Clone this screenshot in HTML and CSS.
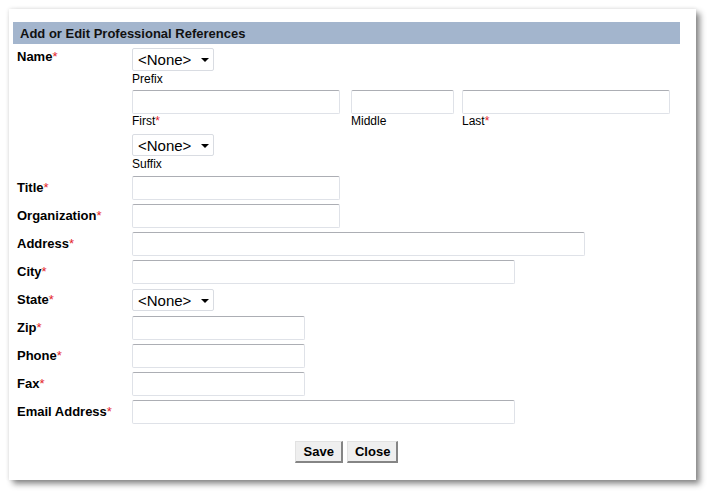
FILE: index.html
```html
<!DOCTYPE html>
<html>
<head>
<meta charset="utf-8">
<link rel="stylesheet" href="styles.css">
</head>
<body>
<div class="window">
  <div class="header">Add or Edit Professional References</div>
  <div class="form">
    <div class="label name-label">Name<span class="req">*</span></div>
    <div class="name-fields">
      <div class="select"><span>&lt;None&gt;</span><i class="arrow"></i></div>
      <div class="sub">Prefix</div>
      <div class="name-row">
        <div class="col col-first"><input class="input w208" type="text"><div class="sub sub-tight">First<span class="req">*</span></div></div>
        <div class="col col-middle"><input class="input w103" type="text"><div class="sub sub-tight">Middle</div></div>
        <div class="col"><input class="input w208" type="text"><div class="sub sub-tight">Last<span class="req">*</span></div></div>
      </div>
      <div class="select suffix"><span>&lt;None&gt;</span><i class="arrow"></i></div>
      <div class="sub">Suffix</div>
    </div>

    <div class="label">Title<span class="req">*</span></div>
    <div class="field"><input class="input w208" type="text"></div>

    <div class="label">Organization<span class="req">*</span></div>
    <div class="field"><input class="input w208" type="text"></div>

    <div class="label">Address<span class="req">*</span></div>
    <div class="field"><input class="input w453" type="text"></div>

    <div class="label">City<span class="req">*</span></div>
    <div class="field"><input class="input w383" type="text"></div>

    <div class="label">State<span class="req">*</span></div>
    <div class="field"><div class="select state"><span>&lt;None&gt;</span><i class="arrow"></i></div></div>

    <div class="label">Zip<span class="req">*</span></div>
    <div class="field"><input class="input w173" type="text"></div>

    <div class="label">Phone<span class="req">*</span></div>
    <div class="field"><input class="input w173" type="text"></div>

    <div class="label">Fax<span class="req">*</span></div>
    <div class="field"><input class="input w173" type="text"></div>

    <div class="label">Email Address<span class="req">*</span></div>
    <div class="field"><input class="input w383" type="text"></div>
  </div>
  <div class="buttons">
    <button class="btn btn-save" type="button">Save</button>
    <button class="btn" type="button">Close</button>
  </div>
</div>
</body>
</html>
```

FILE: styles.css
```css
html, body {
  margin: 0;
  padding: 0;
  background: #ffffff;
}

body {
  font-family: "Liberation Sans", Arial, sans-serif;
  color: #000;
  min-height: 494px;
  overflow: hidden;
}

.window {
  margin: 9px 0 0 9px;
  width: 687px;
  height: 471px;
  box-sizing: border-box;
  padding: 13px 0 0 4px;
  background: #fff;
  box-shadow: 4px 4px 6px rgba(0, 0, 0, 0.45), 0 0 4px rgba(0, 0, 0, 0.12);
}

.header {
  width: 667px;
  height: 22px;
  box-sizing: border-box;
  padding-left: 7px;
  background: #a3b5cd;
  font-weight: bold;
  font-size: 13px;
  line-height: 23px;
  color: #111;
}

.form {
  display: grid;
  grid-template-columns: 115px auto;
  grid-template-rows: 126px;
  grid-auto-rows: 28px;
  margin-top: 4px;
  padding-left: 4px;
}

.label {
  display: flex;
  align-items: center;
  font-weight: bold;
  font-size: 13px;
  line-height: 15px;
  white-space: nowrap;
  padding-bottom: 1px;
}

.name-label {
  align-self: start;
  margin-top: 1px;
  padding-bottom: 0;
}

.req {
  color: #e3242b;
  font-weight: normal;
}

.field {
  display: flex;
  align-items: center;
}

.name-fields {
  display: flex;
  flex-direction: column;
  align-items: flex-start;
}

.sub {
  font-size: 12px;
  line-height: 14px;
  margin-top: 1px;
}

.sub-tight {
  margin-top: 0;
}

.name-row {
  display: flex;
  margin-top: 4px;
}

.col {
  display: flex;
  flex-direction: column;
}

.col-first {
  margin-right: 11px;
}

.col-middle {
  margin-right: 8px;
}

.input {
  display: block;
  margin: 0;
  height: 24px;
  box-sizing: border-box;
  border: 1px solid #dfe2e8;
  border-top-color: #acaeb4;
  border-radius: 2px;
  background: #fff;
  padding: 0 3px;
  font-family: "Liberation Sans", Arial, sans-serif;
  font-size: 13px;
}

.w103 { width: 103px; }
.w173 { width: 173px; }
.w208 { width: 208px; }
.w383 { width: 383px; }
.w453 { width: 453px; }

.select {
  display: flex;
  align-items: center;
  justify-content: space-between;
  width: 82px;
  height: 23px;
  box-sizing: border-box;
  border: 1px solid #d9dce2;
  border-radius: 2px;
  padding: 0 4px 0 5px;
  font-size: 15px;
  color: #000;
  background: #fff;
}

.select.suffix {
  margin-top: 6px;
  height: 22px;
}

.select.state {
  height: 22px;
}

.arrow {
  width: 0;
  height: 0;
  border-left: 4px solid transparent;
  border-right: 4px solid transparent;
  border-top: 4px solid #000;
  margin-top: 1px;
}

.buttons {
  width: 667px;
  display: flex;
  justify-content: center;
  gap: 4px;
  margin-top: 15px;
}

.btn {
  height: 22px;
  margin: 0;
  padding: 0 6px 0 7px;
  box-sizing: border-box;
  background: #efefef;
  border-style: solid;
  border-width: 1px 2px 2px 1px;
  border-color: #e2e2e2 #858585 #858585 #e2e2e2;
  border-radius: 0;
  font-family: "Liberation Sans", Arial, sans-serif;
  font-weight: bold;
  font-size: 13px;
  color: #000;
  line-height: 18px;
}

.btn-save {
  padding: 0 7px 0 8px;
}
```
